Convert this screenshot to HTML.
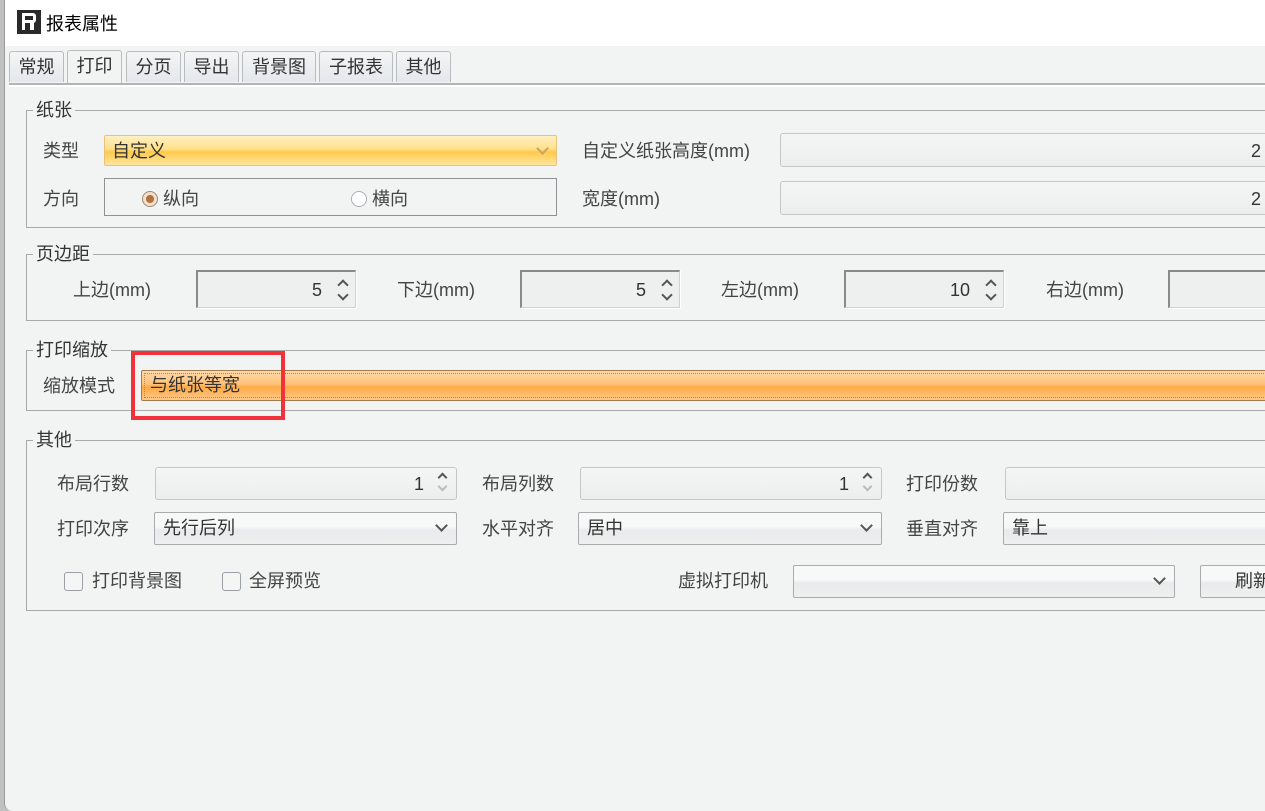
<!DOCTYPE html>
<html><head><meta charset="utf-8"><style>
*{box-sizing:border-box;margin:0;padding:0}
body{width:1265px;height:811px;overflow:hidden;background:#bfc0c0;font-family:"Liberation Sans","Noto Sans CJK SC",sans-serif;font-size:18px;color:#333;position:relative}
.win{position:absolute;left:4px;top:0;width:1270px;height:811px;background:#f2f3f3;border-left:1px solid #9a9a9a;border-radius:0 0 0 8px}
.title{position:absolute;left:0;top:0;right:0;height:46px;background:#fff}
.a{position:absolute;white-space:nowrap}
.tab{position:absolute;top:51px;height:31px;border:1px solid #b8bcbf;border-bottom:none;background:linear-gradient(#f3f5f6,#e4e8ea);border-radius:3px 3px 0 0;text-align:center;line-height:31px;font-size:18px;color:#333}
.tab.on{top:50px;height:34px;background:#f2f3f3}
.fs{position:absolute;border:1px solid #a9a9a9;border-right:none}
.lg{position:absolute;top:-12px;left:6px;background:#f2f3f3;padding:0 3px;line-height:22px}
.lbl{position:absolute;line-height:20px;color:#444}
.box{position:absolute;border:1px solid #c4c7c9;border-radius:3px;background:linear-gradient(#f4f5f5,#eceeee)}
.spin{position:absolute;border:1px solid #d0d0d0;border-top:2px solid #8a8a8a;border-left:2px solid #8a8a8a;background:#eeefef;box-shadow:1px 1px 0 #fff}
.combo{position:absolute;border:1px solid #a8acaf;border-radius:2px;background:linear-gradient(#f7f8f8 45%,#e8eaeb 55%,#eef0f0)}
.org{position:absolute;border:1px solid #e8c27a;border-radius:2px;background:linear-gradient(#fff0c4 0%,#ffe08a 45%,#ffc94a 55%,#ffe6a0 100%)}
.chev{position:absolute;width:9px;height:9px;border-right:2px solid #555;border-bottom:2px solid #555;transform:rotate(45deg)}
.ud{position:absolute;width:8px;height:8px;border-left:2px solid #555;border-top:2px solid #555}
.val{position:absolute;line-height:20px}
</style></head><body>
<div class="win">
<div class="title">
 <div class="a" style="left:12px;top:10px;width:24px;height:24px;background:#2a2a2a"><div style="position:absolute;left:5px;top:3px;width:14px;height:10px;border:3px solid #fff;border-radius:0 3px 3px 0"></div><div style="position:absolute;left:5px;top:12px;width:3px;height:8px;background:#fff"></div><div style="position:absolute;left:13px;top:12px;width:4px;height:8px;background:#fff"></div></div>
 <div class="a" style="left:41px;top:10px;font-size:18px;color:#000">报表属性</div>
</div>
<div class="tab" style="left:4px;width:55px">常规</div>
<div class="tab on" style="left:62px;width:55px">打印</div>
<div class="tab" style="left:121px;width:55px">分页</div>
<div class="tab" style="left:179px;width:55px">导出</div>
<div class="tab" style="left:237px;width:74px">背景图</div>
<div class="tab" style="left:314px;width:74px">子报表</div>
<div class="tab" style="left:391px;width:55px">其他</div>
<div class="a" style="left:4px;top:83px;width:1270px;height:2px;background:#b0b4b6"></div>
<div class="a" style="left:4px;top:85px;width:1270px;height:2px;background:#fff"></div>

<div class="fs" style="left:21px;top:110px;width:1260px;height:118px"><span class="lg">纸张</span></div>
<div class="lbl" style="left:38px;top:141px">类型</div>
<div class="org" style="left:99px;top:135px;width:453px;height:31px"><span class="val" style="left:7px;top:5px">自定义</span><span class="chev" style="left:433px;top:8px;border-color:#c9a45c"></span></div>
<div class="lbl" style="left:38px;top:189px">方向</div>
<div class="a" style="left:99px;top:178px;width:453px;height:38px;border:1px solid #8e9295;background:#f2f3f3"></div>
<div class="a" style="left:137px;top:191px;width:16px;height:16px;border-radius:50%;border:1px solid #9b8a7a;background:#f4e0c8"><div style="position:absolute;left:3px;top:3px;width:8px;height:8px;border-radius:50%;background:#b07040"></div></div>
<div class="lbl" style="left:158px;top:189px">纵向</div>
<div class="a" style="left:346px;top:191px;width:16px;height:16px;border-radius:50%;border:1px solid #a9b0b5;background:#fff"></div>
<div class="lbl" style="left:367px;top:189px">横向</div>
<div class="lbl" style="left:577px;top:141px">自定义纸张高度(mm)</div>
<div class="box" style="left:775px;top:133px;width:500px;height:34px"><span class="val" style="left:470px;top:7px">2</span></div>
<div class="lbl" style="left:577px;top:189px">宽度(mm)</div>
<div class="box" style="left:775px;top:181px;width:500px;height:34px"><span class="val" style="left:470px;top:7px">2</span></div>

<div class="fs" style="left:21px;top:254px;width:1260px;height:67px"><span class="lg">页边距</span></div>
<div class="lbl" style="left:68px;top:280px">上边(mm)</div>
<div class="spin" style="left:191px;top:270px;width:160px;height:38px"><span class="val" style="left:114px;top:8px">5</span><span class="ud" style="left:141px;top:9px;transform:rotate(45deg)"></span><span class="ud" style="left:141px;top:19px;transform:rotate(225deg)"></span></div>
<div class="lbl" style="left:392px;top:280px">下边(mm)</div>
<div class="spin" style="left:515px;top:270px;width:160px;height:38px"><span class="val" style="left:114px;top:8px">5</span><span class="ud" style="left:141px;top:9px;transform:rotate(45deg)"></span><span class="ud" style="left:141px;top:19px;transform:rotate(225deg)"></span></div>
<div class="lbl" style="left:716px;top:280px">左边(mm)</div>
<div class="spin" style="left:839px;top:270px;width:160px;height:38px"><span class="val" style="left:104px;top:8px">10</span><span class="ud" style="left:141px;top:9px;transform:rotate(45deg)"></span><span class="ud" style="left:141px;top:19px;transform:rotate(225deg)"></span></div>
<div class="lbl" style="left:1041px;top:280px">右边(mm)</div>
<div class="spin" style="left:1163px;top:270px;width:120px;height:38px"></div>

<div class="fs" style="left:21px;top:350px;width:1260px;height:61px"><span class="lg">打印缩放</span></div>
<div class="lbl" style="left:38px;top:376px">缩放模式</div>
<div class="a" style="left:136px;top:370px;width:1140px;height:31px;border:1px solid #a07c50;border-radius:2px;background:linear-gradient(#ffd9a8 0%,#ffc27a 45%,#ffaa44 55%,#ffc888 100%)"><div style="position:absolute;inset:2px;border:1px dotted #b08860"></div><span class="val" style="left:8px;top:4px">与纸张等宽</span></div>
<div class="a" style="left:126px;top:351px;width:154px;height:69px;border:4px solid #f0333a"></div>

<div class="fs" style="left:21px;top:440px;width:1260px;height:171px"><span class="lg">其他</span></div>
<div class="lbl" style="left:52px;top:474px">布局行数</div>
<div class="box" style="left:150px;top:467px;width:302px;height:33px"><span class="val" style="left:258px;top:6px">1</span><span class="ud" style="left:283px;top:6px;width:7px;height:7px;transform:rotate(45deg)"></span><span class="ud" style="left:283px;top:15px;width:7px;height:7px;transform:rotate(225deg);border-color:#bbb"></span></div>
<div class="lbl" style="left:477px;top:474px">布局列数</div>
<div class="box" style="left:575px;top:467px;width:302px;height:33px"><span class="val" style="left:258px;top:6px">1</span><span class="ud" style="left:283px;top:6px;width:7px;height:7px;transform:rotate(45deg)"></span><span class="ud" style="left:283px;top:15px;width:7px;height:7px;transform:rotate(225deg);border-color:#bbb"></span></div>
<div class="lbl" style="left:901px;top:474px">打印份数</div>
<div class="box" style="left:1000px;top:467px;width:280px;height:33px"></div>
<div class="lbl" style="left:52px;top:519px">打印次序</div>
<div class="combo" style="left:149px;top:512px;width:303px;height:33px"><span class="val" style="left:8px;top:5px">先行后列</span><span class="chev" style="left:282px;top:8px"></span></div>
<div class="lbl" style="left:477px;top:519px">水平对齐</div>
<div class="combo" style="left:573px;top:512px;width:304px;height:33px"><span class="val" style="left:8px;top:5px">居中</span><span class="chev" style="left:283px;top:8px"></span></div>
<div class="lbl" style="left:901px;top:519px">垂直对齐</div>
<div class="combo" style="left:998px;top:512px;width:290px;height:33px"><span class="val" style="left:8px;top:5px">靠上</span></div>
<div class="a" style="left:59px;top:572px;width:19px;height:19px;border:1px solid #9aa0a4;border-radius:3px;background:#f4f5f5"></div>
<div class="lbl" style="left:87px;top:571px">打印背景图</div>
<div class="a" style="left:217px;top:572px;width:19px;height:19px;border:1px solid #9aa0a4;border-radius:3px;background:#f4f5f5"></div>
<div class="lbl" style="left:244px;top:571px">全屏预览</div>
<div class="lbl" style="left:673px;top:571px">虚拟打印机</div>
<div class="combo" style="left:788px;top:565px;width:382px;height:33px"><span class="chev" style="left:361px;top:8px"></span></div>
<div class="combo" style="left:1195px;top:565px;width:90px;height:33px"><span class="val" style="left:34px;top:5px">刷新</span></div>
</div>
</body></html>
